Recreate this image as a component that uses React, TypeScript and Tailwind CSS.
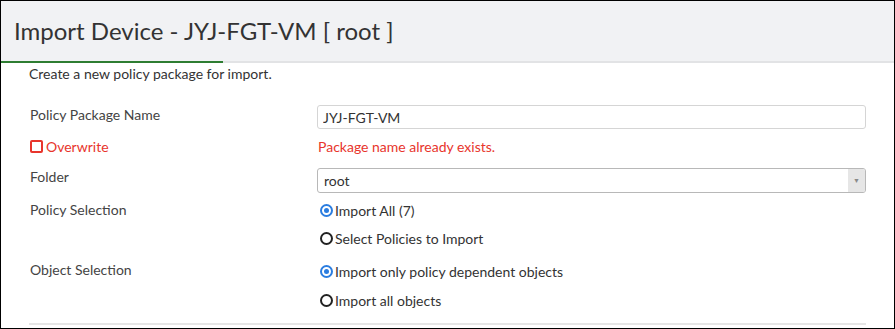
import React from 'react';

function Radio({ checked, label }: { checked?: boolean; label: string }) {
  return (
    <label className="flex items-center">
      <span
        className={
          'ml-[3px] mr-[2px] flex h-[13px] w-[13px] items-center justify-center rounded-full border-2 ' +
          (checked ? 'border-[#2b7de0]' : 'border-[#222]')
        }
      >
        {checked && <span className="h-[5px] w-[5px] rounded-full bg-[#2b7de0]" />}
      </span>
      <span className="text-[14px] text-[#333]">{label}</span>
    </label>
  );
}

export default function App() {
  return (
    <div
      className="box-border flex h-[329px] w-[895px] flex-col overflow-hidden border border-black bg-white"
      style={{ fontFamily: 'Lato, "Open Sans", sans-serif' }}
    >
      <div className="flex h-[60px] shrink-0 items-center bg-[#f1f2f4] pl-[13px]">
        <h1 className="text-[24px] font-normal leading-none text-[#333]">Import Device - JYJ-FGT-VM [ root ]</h1>
      </div>
      <div className="flex h-[2px] shrink-0 bg-[#e2e3e5]">
        <div className="w-[222px] bg-[#2e7d32]" />
      </div>

      <div className="flex flex-col pl-[28px] pr-[28px]">
        <p className="mt-[3px] text-[14px] leading-[16px] text-[#333]">Create a new policy package for import.</p>

        <div className="mt-[23px] flex h-[24px] items-center">
          <div className="w-[288px] pb-[5px] pl-[1px] text-[14px] text-[#444]">Policy Package Name</div>
          <input
            readOnly
            value="JYJ-FGT-VM"
            className="box-border h-[24px] flex-1 rounded-[3px] border border-[#d5d5d5] px-[5px] text-[14px] text-[#333] outline-none"
            style={{ fontFamily: 'Lato, sans-serif' }}
          />
        </div>

        <div className="mt-[7px] flex h-[20px] items-center">
          <div className="flex w-[288px] items-center pl-[1px]">
            <span className="mr-[3px] h-[13px] w-[13px] rounded-[2px] border-2 border-[#e8352c]" />
            <span className="text-[14px] text-[#e8352c]">Overwrite</span>
          </div>
          <div className="pl-[1px] text-[14px] text-[#e8352c]">Package name already exists.</div>
        </div>

        <div className="mt-[12px] flex h-[25px] items-center">
          <div className="w-[288px] pb-[8px] pl-[1px] text-[14px] text-[#444]">Folder</div>
          <div className="box-border flex h-[25px] flex-1 items-stretch rounded-[3px] border border-[#b8b8b8]">
            <span className="flex flex-1 items-center pl-[6px] text-[14px] text-[#333]">root</span>
            <span className="flex w-[17px] items-center justify-center rounded-r-[2px] bg-[#e6e6e6] text-[7px] text-[#8a8a8a]">
              ▼
            </span>
          </div>
        </div>

        <div className="mt-[7px] flex h-[21px] items-center">
          <div className="w-[288px] pb-[2px] pl-[1px] text-[14px] text-[#444]">Policy Selection</div>
          <Radio checked label="Import All (7)" />
        </div>
        <div className="mt-[7px] flex h-[20px] items-center pl-[288px]">
          <Radio label="Select Policies to Import" />
        </div>

        <div className="mt-[13px] flex h-[20px] items-center">
          <div className="w-[288px] pb-[3px] pl-[1px] text-[14px] text-[#444]">Object Selection</div>
          <Radio checked label="Import only policy dependent objects" />
        </div>
        <div className="mt-[9px] flex h-[20px] items-center pl-[288px]">
          <Radio label="Import all objects" />
        </div>

        <div className="mt-[13px] h-[2px] bg-[#e6e6e6]" />
      </div>
    </div>
  );
}
